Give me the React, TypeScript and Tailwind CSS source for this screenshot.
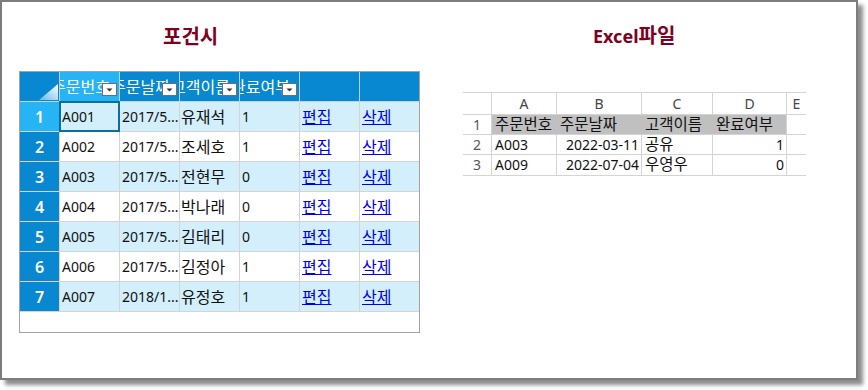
import React from "react";

const rows = [
  ["A001", "2017/5...", "유재석", "1"],
  ["A002", "2017/5...", "조세호", "1"],
  ["A003", "2017/5...", "전현무", "0"],
  ["A004", "2017/5...", "박나래", "0"],
  ["A005", "2017/5...", "김태리", "0"],
  ["A006", "2017/5...", "김정아", "1"],
  ["A007", "2018/1...", "유정호", "1"],
];

const headers = ["주문번호", "주문날짜", "고객이름", "완료여부", "", ""];

function DropBtn() {
  return (
    <div className="absolute right-[2px] top-[11px] w-[15px] h-[13px] bg-white border border-[#6e6e6e] flex items-center justify-center">
      <svg width="7" height="4" viewBox="0 0 7 4">
        <polygon points="0.5,0.5 6.5,0.5 3.5,3.5" fill="#333" />
      </svg>
    </div>
  );
}

function LeftGrid() {
  return (
    <div className="w-[401px] h-[262px] border border-[#a3a3a3] bg-white flex flex-col">
      <div className="flex h-[30px] border-b border-[#c6d3dc] shrink-0">
        <div className="w-[40px] h-full border-r border-[#b3d4ea] bg-[#0788d0] relative">
          <svg className="absolute right-[1px] bottom-[1px]" width="19" height="16" viewBox="0 0 19 16">
            <defs>
              <linearGradient id="cg" x1="1" y1="0" x2="0" y2="1">
                <stop offset="0" stopColor="#ffffff" />
                <stop offset="1" stopColor="#62b9ea" />
              </linearGradient>
            </defs>
            <polygon points="0,16 19,0 19,16" fill="url(#cg)" />
          </svg>
        </div>
        {headers.map((h, i) => (
          <div
            key={i}
            className={
              "h-full relative overflow-hidden " +
              (i === 5 ? "w-[59px] " : "w-[60px] border-r border-[#b3d4ea] ") +
              (i === 0 ? "bg-[#26b4f4]" : "bg-[#0788d0]")
            }
          >
            {h && (
              <span className="absolute left-[-9px] top-0 h-full flex items-center pt-[1px] text-white text-[16px] whitespace-nowrap leading-none">
                {h}
              </span>
            )}
            {h && <DropBtn />}
          </div>
        ))}
      </div>
      {rows.map((r, ri) => {
        const odd = ri % 2 === 0;
        const bg = odd ? "bg-[#d2effb]" : "bg-white";
        return (
          <div key={ri} className={"flex h-[30px] border-b border-[#d4d4d4] shrink-0 " + bg}>
            <div
              className={
                "w-[40px] h-full border-r border-[#d4d4d4] flex items-center justify-center text-white text-[16px] font-semibold " +
                (ri === 0 ? "bg-[#26b4f4]" : "bg-[#0788d0]")
              }
            >
              {ri + 1}
            </div>
            <div className="w-[60px] h-full border-r border-[#d4d4d4] relative flex items-center pl-[2px] text-[14px] text-[#111]">
              {r[0]}
              {ri === 0 && (
                <div className="absolute -left-[1px] -top-[1px] -right-[1px] -bottom-[1px] border-2 border-[#0b6f9c]" />
              )}
            </div>
            <div className="w-[60px] h-full border-r border-[#d4d4d4] flex items-center pl-[2px] text-[14px] text-[#111] whitespace-nowrap overflow-hidden">
              {r[1]}
            </div>
            <div className="w-[60px] h-full border-r border-[#d4d4d4] flex items-center pl-[1px] text-[16px] text-[#111] whitespace-nowrap">
              {r[2]}
            </div>
            <div className="w-[60px] h-full border-r border-[#d4d4d4] flex items-center pl-[2px] text-[14px] text-[#111]">
              {r[3]}
            </div>
            <div className="w-[60px] h-full border-r border-[#d4d4d4] flex items-center pl-[2px] text-[16px]">
              <span className="text-[#0000ee] underline">편집</span>
            </div>
            <div className="w-[59px] h-full flex items-center pl-[2px] text-[16px]">
              <span className="text-[#0000ee] underline">삭제</span>
            </div>
          </div>
        );
      })}
      <div className="flex-1" />
    </div>
  );
}

const xCols = [
  { w: "w-[29px]", label: "" },
  { w: "w-[65px]", label: "A" },
  { w: "w-[85px]", label: "B" },
  { w: "w-[71px]", label: "C" },
  { w: "w-[74px]", label: "D" },
  { w: "w-[19px]", label: "E" },
];

function ExcelGrid() {
  const line = "border-[#d4d4d4]";
  return (
    <div className={"w-[343px] border-t text-[14px] text-[#111] " + line}>
      <div className={"flex h-[22px] border-b " + line}>
        {xCols.map((c, i) => (
          <div
            key={i}
            className={
              c.w +
              " h-full flex items-center justify-center text-[#444] " +
              (i < 5 ? "border-r " + line : "")
            }
          >
            {c.label}
          </div>
        ))}
      </div>
      <div className={"flex h-[20px] border-b leading-none " + line}>
        <div className={"w-[29px] h-full border-r flex items-center justify-center text-[#555] " + line}>1</div>
        <div className="w-[65px] h-full bg-[#c0c0c0] border-r border-transparent flex items-center pl-[3px] whitespace-nowrap overflow-visible text-[15.5px]">
          주문번호
        </div>
        <div className="w-[85px] h-full bg-[#c0c0c0] border-r border-transparent flex items-center pl-[3px] whitespace-nowrap text-[15.5px]">
          주문날짜
        </div>
        <div className="w-[71px] h-full bg-[#c0c0c0] border-r border-transparent flex items-center pl-[3px] whitespace-nowrap text-[15.5px]">
          고객이름
        </div>
        <div className={"w-[74px] h-full bg-[#c0c0c0] border-r flex items-center pl-[3px] whitespace-nowrap text-[15.5px] " + line}>
          완료여부
        </div>
        <div className="w-[19px] h-full" />
      </div>
      {[
        ["2", "A003", "2022-03-11", "공유", "1", "h-[20px]"],
        ["3", "A009", "2022-07-04", "우영우", "0", "h-[21px]"],
      ].map((r) => (
        <div key={r[0]} className={"flex border-b leading-none " + r[5] + " " + line}>
          <div className={"w-[29px] h-full border-r flex items-center justify-center text-[#555] " + line}>{r[0]}</div>
          <div className={"w-[65px] h-full border-r flex items-center pl-[3px] " + line}>{r[1]}</div>
          <div className={"w-[85px] h-full border-r flex items-center justify-end pr-[2px] " + line}>{r[2]}</div>
          <div className={"w-[71px] h-full border-r flex items-center pl-[3px] whitespace-nowrap text-[15.5px] " + line}>{r[3]}</div>
          <div className={"w-[74px] h-full border-r flex items-center justify-end pr-[2px] " + line}>{r[4]}</div>
          <div className="w-[19px] h-full" />
        </div>
      ))}
    </div>
  );
}

export default function App() {
  return (
    <div className="w-[868px] h-[390px] bg-white font-['Noto_Sans','Noto_Sans_CJK_KR',sans-serif]">
      <div className="w-[858px] h-[380px] border-2 border-[#7d7d7d] bg-white shadow-[5px_5px_4px_rgba(0,0,0,0.45)] flex">
        <div className="w-[461px] flex flex-col">
          <div className="h-[69px] flex items-center pl-[161px]">
            <span className="text-[20px] font-bold text-[#80001f]">포건시</span>
          </div>
          <div className="ml-[17px]">
            <LeftGrid />
          </div>
        </div>
        <div className="flex-1 flex flex-col">
          <div className="h-[68px] flex items-center pl-[130px]">
            <span className="text-[18px] font-bold text-[#80001f]">
              Excel<span className="text-[20px]">파일</span>
            </span>
          </div>
          <div className="mt-[22px]">
            <ExcelGrid />
          </div>
        </div>
      </div>
    </div>
  );
}
